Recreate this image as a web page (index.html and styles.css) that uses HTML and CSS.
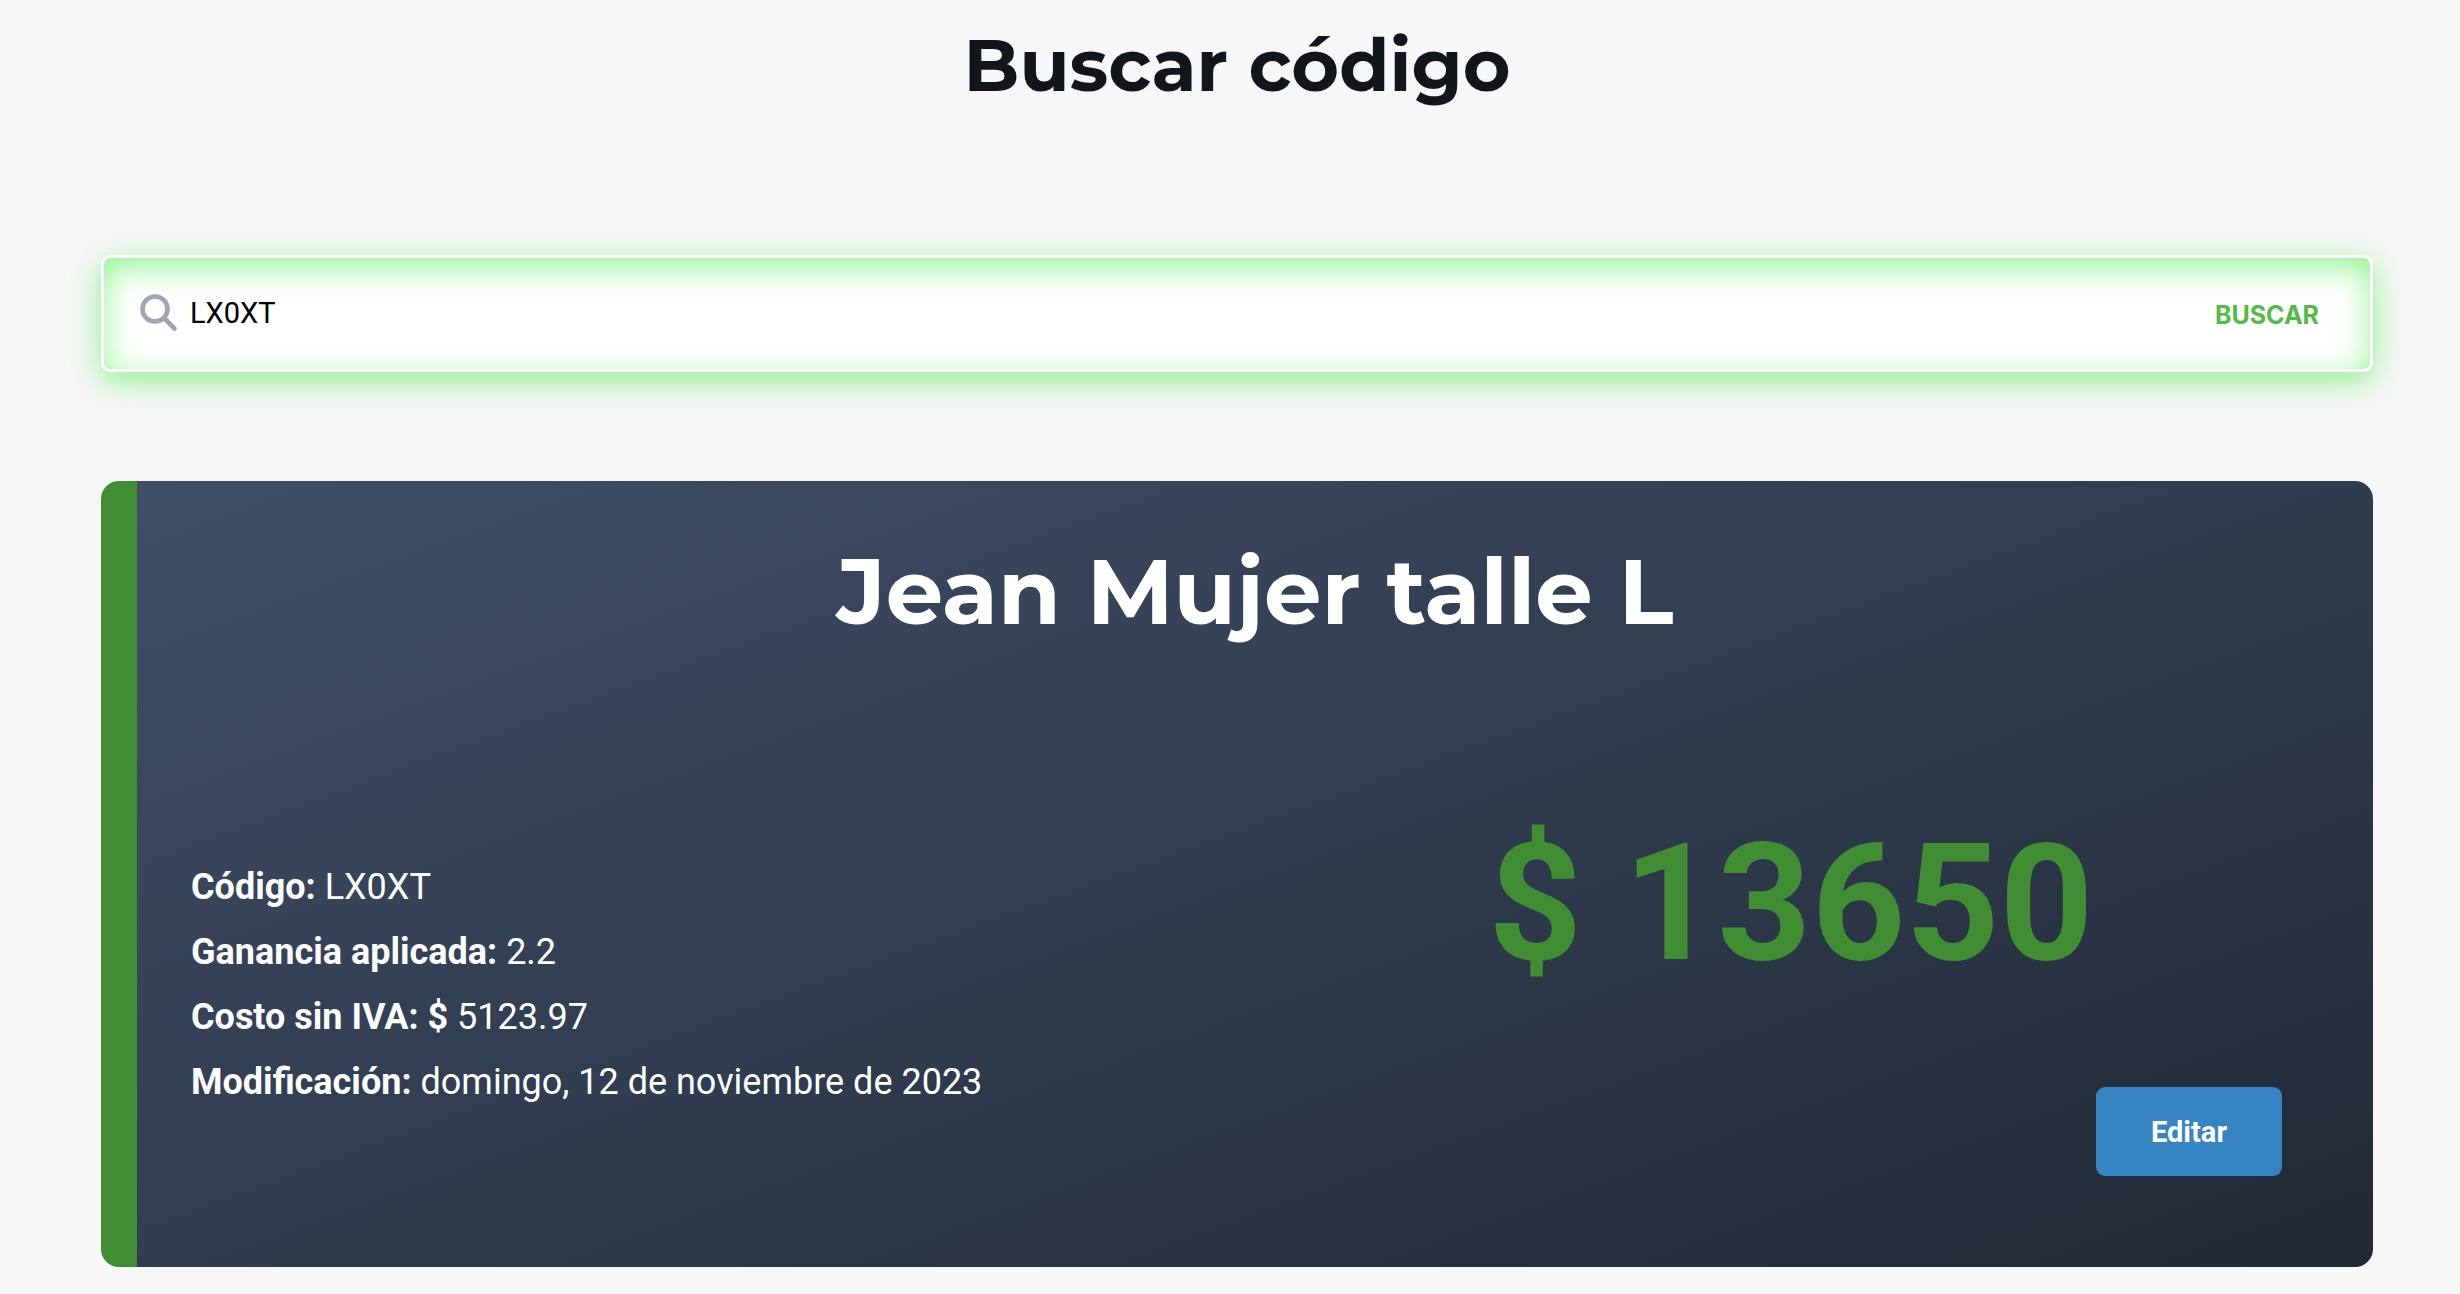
FILE: index.html
```html
<!DOCTYPE html>
<html lang="es">
<head>
<meta charset="utf-8">
<meta name="viewport" content="width=device-width, initial-scale=1">
<title>Buscar código</title>
<link rel="stylesheet" href="styles.css">
</head>
<body>
<main class="page">
  <h1 class="page-title">Buscar código</h1>
  <form class="search">
    <label class="search-label" for="code" aria-label="Código">
      <svg class="search-icon" viewBox="0 0 38 38" fill="none" stroke="currentColor" aria-hidden="true">
        <circle cx="15" cy="15" r="12.5" stroke-width="4.6"/>
        <path d="M24.5 24.5 34.5 34.5" stroke-width="4.6" stroke-linecap="round"/>
      </svg>
    </label>
    <input class="search-input" id="code" type="text" value="LX0XT">
    <button class="search-button" type="submit">BUSCAR</button>
  </form>
  <article class="card">
    <h2 class="card-title">Jean Mujer talle L</h2>
    <div class="card-body">
      <ul class="details">
        <li><strong>Código:</strong> LX0XT</li>
        <li><strong>Ganancia aplicada:</strong> 2.2</li>
        <li><strong>Costo sin IVA: $</strong> 5123.97</li>
        <li><strong>Modificación:</strong> domingo, 12 de noviembre de 2023</li>
      </ul>
      <div class="card-side">
        <p class="price">$ 13650</p>
        <button class="edit-button" type="button">Editar</button>
      </div>
    </div>
  </article>
</main>
</body>
</html>
```
FILE: styles.css
```css
* {
  box-sizing: border-box;
}

body {
  margin: 0;
  background: #f7f7f7;
  color: #11161d;
  font-family: Roboto, "Liberation Sans", sans-serif;
}

.page {
  padding: 20px 87px 27px 101px;
}

.page-title {
  margin: 0 0 145px;
  font-family: Montserrat, Inter, sans-serif;
  font-size: 73px;
  line-height: 90px;
  font-weight: 700;
  text-align: center;
}

.search {
  display: flex;
  align-items: center;
  height: 117px;
  margin-bottom: 109px;
  padding: 0 47px 2px 36px;
  border: 3px solid #fff;
  border-radius: 9px;
  background: #fff;
  box-shadow: 0 9px 32px rgba(40, 235, 42, 0.5), inset 0 9px 32px rgba(40, 235, 42, 0.5);
}

.search-label {
  display: flex;
  margin-right: 12px;
}

.search-icon {
  width: 38px;
  height: 38px;
  color: #a0a5b1;
}

.search-input {
  flex: 1;
  min-width: 0;
  padding: 0;
  border: 0;
  outline: 0;
  background: none;
  color: #000;
  font: 400 29px/36px Roboto, "Liberation Sans", sans-serif;
}

.search-button {
  padding: 4px 4px 0;
  border: 0;
  background: none;
  color: #54bb48;
  font: 700 25px/36px Inter, "Liberation Sans", sans-serif;
}

.card {
  padding: 54px 54px 91px;
  border-left: 36px solid #418d34;
  border-radius: 18px;
  background: linear-gradient(160deg, #3f4d67, #303c4f 50%, #212935);
  color: #fff;
}

.card-title {
  margin: 0 0 142px;
  font-family: Montserrat, Inter, sans-serif;
  font-size: 91px;
  line-height: 114px;
  font-weight: 700;
  text-align: center;
}

.card-body {
  display: grid;
  grid-template-columns: 1fr 1fr;
  column-gap: 16px;
}

.details {
  margin: 0;
  padding: 64px 0 0;
  list-style: none;
  font-size: 36px;
  line-height: 65px;
}

.card-side {
  display: flex;
  flex-direction: column;
  gap: 72px;
}

.price {
  margin: 0;
  color: #418d34;
  font-size: 164px;
  line-height: 224px;
  font-weight: 700;
  text-align: center;
}

.edit-button {
  align-self: flex-end;
  height: 89px;
  margin-right: 37px;
  padding: 0 55px;
  border: 0;
  border-radius: 9px;
  background: #3684c2;
  color: #fff;
  font: 700 29px/36px Roboto, "Liberation Sans", sans-serif;
}
```
